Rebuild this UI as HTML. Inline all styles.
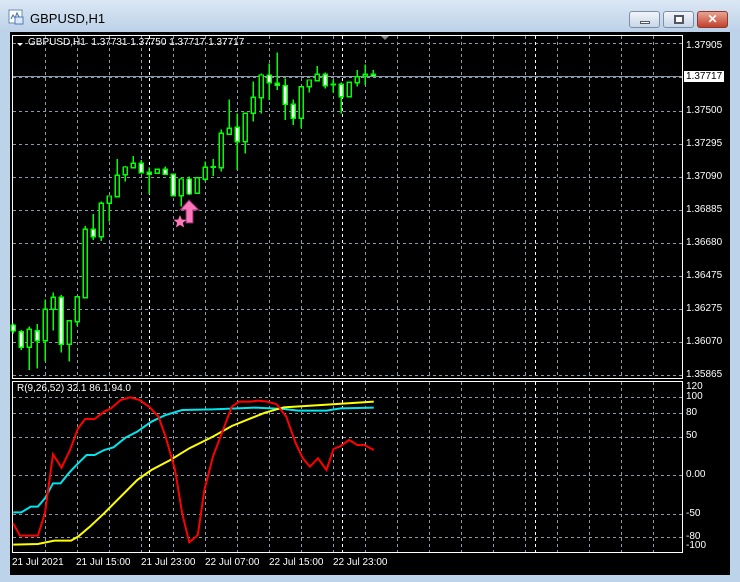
<!DOCTYPE html>
<html><head><meta charset="utf-8"><style>
*{margin:0;padding:0;box-sizing:border-box}
body{width:740px;height:582px;overflow:hidden;background:#bcd3ea;font-family:"Liberation Sans",sans-serif;position:relative}
.tb{position:absolute;left:0;top:0;width:740px;height:32px;background:linear-gradient(#dbe7f4,#bcd1e8)}
.title{position:absolute;left:30px;top:11px;font-size:13px;color:#000}
.btn{position:absolute;top:11px;height:17px;width:31px;border:1px solid #7d8fa6;border-radius:3px;background:linear-gradient(#f0f5fb,#c8d6e6)}
.chart{position:absolute;left:10px;top:32px;width:720px;height:543px;background:#000}
.lbl{position:absolute;font-size:10px;color:#fff;white-space:nowrap}
.c rect,.c path{shape-rendering:crispEdges}
</style></head><body>
<div class="tb"></div>
<svg style="position:absolute;left:8px;top:9px" width="16" height="16"><rect x="1" y="1" width="13" height="13" fill="#fff" stroke="#6a8bb5"/><path d="M3 10l2-4 2 3 2-5 2 4" stroke="#3a6aa8" fill="none"/><rect x="7" y="8" width="8" height="7" fill="#dde8f5" stroke="#4a7ab8"/></svg>
<div class="title">GBPUSD,H1</div>
<div class="btn" style="left:629px"><div style="position:absolute;left:10px;top:9px;width:10px;height:3px;background:#fff;border:1px solid #556"></div></div>
<div class="btn" style="left:663px"><div style="position:absolute;left:10px;top:3px;width:10px;height:9px;border:2px solid #556;background:#fff"></div></div>
<div class="btn" style="left:697px;background:linear-gradient(#e8a393,#c2412c);border-color:#8a3a2e;color:#fff;font-weight:bold;font-size:12px;text-align:center;line-height:15px">✕</div>
<div class="chart"></div>
<svg style="position:absolute;left:0;top:0" width="740" height="582">
<g stroke="#8a9aa8" stroke-dasharray="3,3" stroke-width="1">
<path d="M13 43.5H682M13 77.5H682M13 111.5H682M13 144.5H682M13 177.5H682M13 210.5H682M13 243.5H682M13 276.5H682M13 309.5H682M13 342.5H682M13 375.5H682"/>
<path d="M13 397.5H682M13 413.5H682M13 437.5H682M13 475.5H682M13 514.5H682M13 537.5H682"/>
<path d="M45.5 36V378M77.5 36V378M109.5 36V378M141.5 36V378M173.5 36V378M205.5 36V378M237.5 36V378M269.5 36V378M301.5 36V378M333.5 36V378M365.5 36V378M397.5 36V378M429.5 36V378M461.5 36V378M493.5 36V378M525.5 36V378M557.5 36V378M589.5 36V378M621.5 36V378M653.5 36V378"/>
<path d="M45.5 382V552M77.5 382V552M109.5 382V552M141.5 382V552M173.5 382V552M205.5 382V552M237.5 382V552M269.5 382V552M301.5 382V552M333.5 382V552M365.5 382V552M397.5 382V552M429.5 382V552M461.5 382V552M493.5 382V552M525.5 382V552M557.5 382V552M589.5 382V552M621.5 382V552M653.5 382V552"/>
</g>
<g stroke="#fff" stroke-dasharray="3,3"><path d="M149.5 36V378M342.5 36V378M535.5 36V378M149.5 382V552M342.5 382V552M535.5 382V552"/></g>
<path d="M13 76.5H682" stroke="#8a9aa8"/>
<rect x="12.5" y="35.5" width="670" height="343" fill="none" stroke="#fff"/>
<rect x="12.5" y="381.5" width="670" height="171" fill="none" stroke="#fff"/>
<path d="M381 36l4 4 4-4z" fill="#888"/>
<path d="M17 43h6l-3 3z" fill="#fff"/>
<rect x="684" y="71" width="40" height="11" fill="#fff"/>
</svg>
<svg class="c" style="position:absolute;left:0;top:40px" width="400" height="340" viewBox="0 0 1200 1020">
<path vector-effect="non-scaling-stroke" stroke="#00ff00" stroke-width="1.2" fill="none" d="M40 850V880M64 870V930M88 860V990M112 852V985M136 778V965M160 757V872M184 765V938M208 842V965M232 770V858M256 558V776M280 522V600M304 485V603M328 468V545M352 357V470M376 378V425M400 348V385M424 360V400M448 383V462M472 385V402M496 380V405M520 403V470M544 412V500M568 410V465M592 413V460M616 365V425M640 357V408M664 268V395M688 178V285M712 220V390M736 220V340M760 125V245M784 100V220M808 70V180M832 37V150M856 115V240M880 178V255M904 140V265M928 120V158M952 78V125M976 98V145M1000 118V158M1024 128V220M1048 127V170M1072 90V140M1096 73V135M1120 90V110"/>
<g stroke="#00ff00" stroke-width="1.2">
<g fill="#fff">
<rect x="34" y="855" width="12" height="18" vector-effect="non-scaling-stroke"/>
<rect x="58" y="875" width="12" height="47" vector-effect="non-scaling-stroke"/>
<rect x="106" y="872" width="12" height="30" vector-effect="non-scaling-stroke"/>
<rect x="178" y="772" width="12" height="141" vector-effect="non-scaling-stroke"/>
<rect x="274" y="568" width="12" height="22" vector-effect="non-scaling-stroke"/>
<rect x="418" y="370" width="12" height="28" vector-effect="non-scaling-stroke"/>
<rect x="442" y="397" width="12" height="6" vector-effect="non-scaling-stroke"/>
<rect x="490" y="388" width="12" height="15" vector-effect="non-scaling-stroke"/>
<rect x="514" y="403" width="12" height="64" vector-effect="non-scaling-stroke"/>
<rect x="562" y="417" width="12" height="45" vector-effect="non-scaling-stroke"/>
<rect x="706" y="262" width="12" height="43" vector-effect="non-scaling-stroke"/>
<rect x="802" y="105" width="12" height="23" vector-effect="non-scaling-stroke"/>
<rect x="826" y="130" width="12" height="6" vector-effect="non-scaling-stroke"/>
<rect x="850" y="137" width="12" height="56" vector-effect="non-scaling-stroke"/>
<rect x="874" y="193" width="12" height="42" vector-effect="non-scaling-stroke"/>
<rect x="970" y="103" width="12" height="34" vector-effect="non-scaling-stroke"/>
<rect x="1018" y="133" width="12" height="37" vector-effect="non-scaling-stroke"/>
<rect x="1114" y="103" width="12" height="5" vector-effect="non-scaling-stroke"/>
</g>
<g fill="#000">
<rect x="82" y="868" width="12" height="54" vector-effect="non-scaling-stroke"/>
<rect x="130" y="808" width="12" height="94" vector-effect="non-scaling-stroke"/>
<rect x="154" y="772" width="12" height="36" vector-effect="non-scaling-stroke"/>
<rect x="202" y="842" width="12" height="71" vector-effect="non-scaling-stroke"/>
<rect x="226" y="770" width="12" height="75" vector-effect="non-scaling-stroke"/>
<rect x="250" y="568" width="12" height="205" vector-effect="non-scaling-stroke"/>
<rect x="298" y="490" width="12" height="100" vector-effect="non-scaling-stroke"/>
<rect x="322" y="468" width="12" height="22" vector-effect="non-scaling-stroke"/>
<rect x="346" y="406" width="12" height="64" vector-effect="non-scaling-stroke"/>
<rect x="370" y="381" width="12" height="23" vector-effect="non-scaling-stroke"/>
<rect x="394" y="370" width="12" height="13" vector-effect="non-scaling-stroke"/>
<rect x="466" y="388" width="12" height="12" vector-effect="non-scaling-stroke"/>
<rect x="538" y="417" width="12" height="50" vector-effect="non-scaling-stroke"/>
<rect x="586" y="413" width="12" height="47" vector-effect="non-scaling-stroke"/>
<rect x="610" y="382" width="12" height="36" vector-effect="non-scaling-stroke"/>
<rect x="634" y="380" width="12" height="2" vector-effect="non-scaling-stroke"/>
<rect x="658" y="280" width="12" height="103" vector-effect="non-scaling-stroke"/>
<rect x="682" y="265" width="12" height="18" vector-effect="non-scaling-stroke"/>
<rect x="730" y="220" width="12" height="85" vector-effect="non-scaling-stroke"/>
<rect x="754" y="172" width="12" height="48" vector-effect="non-scaling-stroke"/>
<rect x="778" y="105" width="12" height="68" vector-effect="non-scaling-stroke"/>
<rect x="898" y="140" width="12" height="95" vector-effect="non-scaling-stroke"/>
<rect x="922" y="120" width="12" height="20" vector-effect="non-scaling-stroke"/>
<rect x="946" y="103" width="12" height="19" vector-effect="non-scaling-stroke"/>
<rect x="994" y="133" width="12" height="2" vector-effect="non-scaling-stroke"/>
<rect x="1042" y="127" width="12" height="43" vector-effect="non-scaling-stroke"/>
<rect x="1066" y="110" width="12" height="18" vector-effect="non-scaling-stroke"/>
<rect x="1090" y="103" width="12" height="6" vector-effect="non-scaling-stroke"/>
</g></g>
</svg>
<svg style="position:absolute;left:0;top:0" width="740" height="582">
<path d="M180 210L189 200L199 210L193 210L193 223L186 223L186 210Z" fill="#ff77bb" stroke="#8a2a6a" stroke-width="1"/>
<path d="M180 215l1.8 4.5 4.8 .3-3.7 3 1.2 4.7-4.1-2.6-4.1 2.6 1.2-4.7-3.7-3 4.8-.3z" fill="#ff77bb"/>
</svg>
<svg style="position:absolute;left:0;top:370px" width="740" height="212" viewBox="0 0 1564 636" preserveAspectRatio="none">
<g fill="none" stroke-width="2">
<polyline vector-effect="non-scaling-stroke" stroke="#00e5ee" stroke-width="2" points="28,427 45,427 65,410 80,410 95,385 112,340 128,340 145,310 165,280 183,255 200,255 220,240 240,232 265,203 290,185 320,155 350,135 385,120 450,118 540,113 600,117 630,122 690,122 720,115 790,113"/>
<polyline vector-effect="non-scaling-stroke" stroke="#ffff00" stroke-width="2" points="28,524 80,522 115,512 150,512 165,500 190,470 220,430 255,380 290,330 320,300 360,270 400,235 450,200 490,168 530,145 560,128 600,112 700,103 790,95"/>
<polyline vector-effect="non-scaling-stroke" stroke="#ff0000" stroke-width="2" points="28,460 42,497 80,497 95,430 112,253 130,293 148,240 165,175 180,147 200,147 220,125 235,115 255,90 275,82 295,90 315,110 335,140 350,200 370,300 385,430 400,517 418,495 432,360 450,260 470,185 490,110 505,95 530,95 545,92 565,95 585,103 605,140 625,220 640,265 655,290 672,265 690,300 705,237 720,228 738,210 755,225 770,225 790,240"/>
</g></svg>
<div class="lbl" style="left:28px;top:37px">GBPUSD,H1&nbsp; 1.37731 1.37750 1.37717 1.37717</div>
<div class="lbl" style="left:686px;top:40px">1.37905</div>
<div class="lbl" style="left:686px;top:71px;color:#000">1.37717</div>
<div class="lbl" style="left:686px;top:105px">1.37500</div>
<div class="lbl" style="left:686px;top:138px">1.37295</div>
<div class="lbl" style="left:686px;top:171px">1.37090</div>
<div class="lbl" style="left:686px;top:204px">1.36885</div>
<div class="lbl" style="left:686px;top:237px">1.36680</div>
<div class="lbl" style="left:686px;top:270px">1.36475</div>
<div class="lbl" style="left:686px;top:303px">1.36275</div>
<div class="lbl" style="left:686px;top:336px">1.36070</div>
<div class="lbl" style="left:686px;top:369px">1.35865</div>
<div class="lbl" style="left:17px;top:383px">R(9,26,52) 32.1 86.1 94.0</div>
<div class="lbl" style="left:686px;top:381px">120</div>
<div class="lbl" style="left:686px;top:391px">100</div>
<div class="lbl" style="left:686px;top:407px">80</div>
<div class="lbl" style="left:686px;top:430px">50</div>
<div class="lbl" style="left:686px;top:469px">0.00</div>
<div class="lbl" style="left:686px;top:508px">-50</div>
<div class="lbl" style="left:686px;top:531px">-80</div>
<div class="lbl" style="left:686px;top:540px">-100</div>
<div class="lbl" style="left:12px;top:557px">21 Jul 2021</div>
<div class="lbl" style="left:76px;top:557px">21 Jul 15:00</div>
<div class="lbl" style="left:141px;top:557px">21 Jul 23:00</div>
<div class="lbl" style="left:205px;top:557px">22 Jul 07:00</div>
<div class="lbl" style="left:269px;top:557px">22 Jul 15:00</div>
<div class="lbl" style="left:333px;top:557px">22 Jul 23:00</div>
</body></html>
